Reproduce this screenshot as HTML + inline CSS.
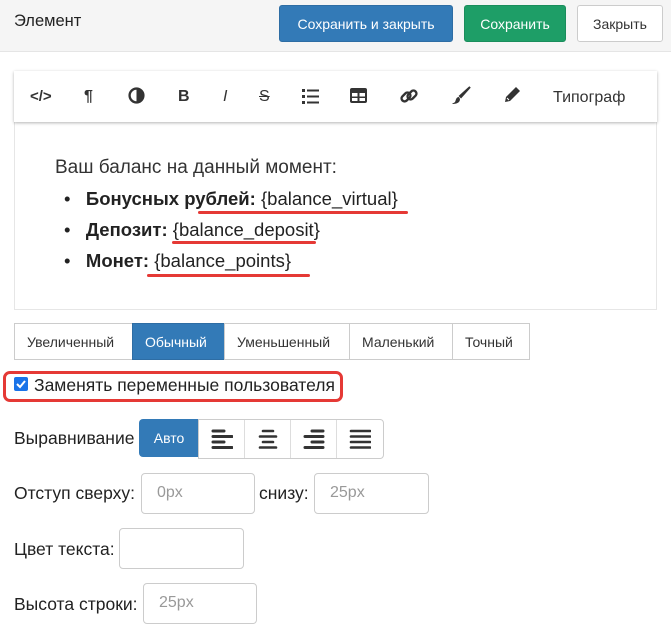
<!DOCTYPE html>
<html><head><meta charset="utf-8"><style>
*{box-sizing:border-box}
body{margin:0;width:671px;height:625px;overflow:hidden;background:#fff;font-family:"Liberation Sans",Arial,sans-serif;color:#222;position:relative}
.a{position:absolute}
.hdr{left:0;top:0;width:671px;height:52px;background:#f5f5f5;border-bottom:1px solid #e5e5e5}
.btn{position:absolute;border-radius:3px;font-size:14px;display:flex;align-items:center;justify-content:center;height:37px;top:5px}
.tb{left:14px;top:71px;width:643px;height:51px;background:#fff;box-shadow:0 1px 3px rgba(0,0,0,.3);z-index:2}
.ct{left:14px;top:120px;width:643px;height:190px;border:1px solid #e6e6e6}
.ic{position:absolute;top:17px;font-size:16px;color:#333}
.seg{top:323px;height:37px;display:flex}
.seg div{border:1px solid #ccc;margin-left:-1px;padding:0 12px;font-size:14px;display:flex;align-items:center;color:#333}
.inp{position:absolute;border:1px solid #ccc;border-radius:4px;height:41px;font-size:16px;color:#999;padding:10px 0 0 15px}
.lbl{position:absolute;font-size:17.5px;color:#222}
.ul{position:absolute;height:3px;background:#e53935;border-radius:2px}
</style></head><body>
<div class="a hdr"></div>
<div class="a" style="left:14px;top:12px;font-size:16.5px">Элемент</div>
<div class="btn" style="left:279px;width:174px;background:#337ab7;border:1px solid #2e6da4;color:#fff">Сохранить и закрыть</div>
<div class="btn" style="left:464px;width:102px;background:#1e9e67;border:1px solid #1a8d5c;color:#fff">Сохранить</div>
<div class="btn" style="left:577px;width:86px;background:#fff;border:1px solid #ccc;color:#333">Закрыть</div>

<div class="a tb">
 <div class="ic" style="left:16px;font-weight:bold;font-size:15px">&lt;/&gt;</div>
 <div class="ic" style="left:70px;font-weight:bold">¶</div>
 <div class="ic" style="left:114px;top:16px"><svg width="17" height="17" viewBox="0 0 16 16"><circle cx="8" cy="8" r="6.5" fill="none" stroke="#333" stroke-width="2.2"/><path d="M8 1.5A6.5 6.5 0 0 1 8 14.5Z" fill="#333"/></svg></div>
 <div class="ic" style="left:164px;font-weight:bold">B</div>
 <div class="ic" style="left:209px;font-style:italic">I</div>
 <div class="ic" style="left:245px;text-decoration:line-through">S</div>
 <div class="ic" style="left:288px;top:17px"><svg width="17" height="16" viewBox="0 0 17 16"><g fill="#333"><rect x="0" y="1" width="3" height="3"/><rect x="0" y="7" width="3" height="3"/><rect x="0" y="13" width="3" height="3"/><rect x="5" y="1.5" width="12" height="2"/><rect x="5" y="7.5" width="12" height="2"/><rect x="5" y="13.5" width="12" height="2"/></g></svg></div>
 <div class="ic" style="left:336px;top:17px"><svg width="17" height="15" viewBox="0 0 17 15"><rect x="0" y="0" width="17" height="15" rx="2" fill="#333"/><g fill="#fff"><rect x="2" y="5" width="5.5" height="3.5"/><rect x="9.5" y="5" width="5.5" height="3.5"/><rect x="2" y="10" width="5.5" height="3"/><rect x="9.5" y="10" width="5.5" height="3"/></g></svg></div>
 <div class="ic" style="left:385px;top:15px"><svg width="20" height="20" viewBox="0 0 20 20"><g fill="none" stroke="#333" stroke-width="2.4"><rect x="2" y="8" width="10" height="6" rx="3" transform="rotate(-45 7 11)"/><rect x="8" y="6" width="10" height="6" rx="3" transform="rotate(-45 13 9)"/></g></svg></div>
 <div class="ic" style="left:438px;top:15px"><svg width="19" height="19" viewBox="0 0 19 19"><path d="M18 1L9 11l-1-1z" fill="#333" stroke="#333" stroke-width="2"/><path d="M7 11c-3 0-3 3-4 5-1 1-2 1-3 2 4 0 8-1 8-5z" fill="#333"/></svg></div>
 <div class="ic" style="left:489px;top:15px"><svg width="18" height="18" viewBox="0 0 18 18"><path d="M13 1l4 4-10 10-5 1 1-5z" fill="#333"/><path d="M4 12l2 2" stroke="#fff" stroke-width="1"/></svg></div>
 <div class="ic" style="left:539px;top:18px;font-size:16px">Типограф</div>
</div>
<div class="a ct"></div>
<div class="a" style="left:55px;top:157px;font-size:19px;color:#333">Ваш баланс на данный момент:</div>
<div class="a" style="left:64px;top:183px;font-size:18.5px;line-height:31px;color:#222">
 <div>•&nbsp;&nbsp;&nbsp;<b>Бонусных рублей:</b> {balance_virtual}</div>
 <div>•&nbsp;&nbsp;&nbsp;<b>Депозит:</b> {balance_deposit}</div>
 <div>•&nbsp;&nbsp;&nbsp;<b>Монет:</b> {balance_points}</div>
</div>
<div class="ul" style="left:198px;top:211px;width:210px"></div>
<div class="ul" style="left:172px;top:241px;width:144px"></div>
<div class="ul" style="left:147px;top:274px;width:163px"></div>

<div class="a seg" style="left:15px">
 <div style="width:119px">Увеличенный</div>
 <div style="width:93px;background:#337ab7;border-color:#2e6da4;color:#fff">Обычный</div>
 <div style="width:126px">Уменьшенный</div>
 <div style="width:104px">Маленький</div>
 <div style="width:78px">Точный</div>
</div>
<div class="a" style="left:3px;top:371px;width:340px;height:31px;border:3px solid #e53935;border-radius:7px"></div>
<div class="a" style="left:14px;top:377px;width:14px;height:14px;background:#1a73e8;border-radius:2px"><svg width="14" height="14" viewBox="0 0 14 14"><path d="M3 7l3 3 5-6" fill="none" stroke="#fff" stroke-width="2"/></svg></div>
<div class="lbl" style="left:34px;top:375px;font-size:17.5px">Заменять переменные пользователя</div>

<div class="lbl" style="left:14px;top:428px">Выравнивание</div>
<div class="a" style="left:139px;top:419px;width:60px;height:38px;background:#337ab7;border-radius:4px 0 0 4px;color:#fff;font-size:14px;display:flex;align-items:center;justify-content:center">Авто</div>
<div class="a" style="left:198px;top:419px;width:186px;height:40px;border:1px solid #ccc;border-radius:0 4px 4px 0;display:flex">
 <div style="width:46px;border-right:1px solid #ddd;position:relative"><svg style="position:absolute;left:12px;top:9px" width="22" height="20" viewBox="0 0 22 20"><g stroke="#333" stroke-width="3" stroke-linecap="round"><path d="M2 2h11M2 7.5h19M2 13h11M2 18.5h19"/></g></svg></div>
 <div style="width:46px;border-right:1px solid #ddd;position:relative"><svg style="position:absolute;left:12px;top:9px" width="22" height="20" viewBox="0 0 22 20"><g stroke="#333" stroke-width="2.6" stroke-linecap="round"><path d="M6 2h10M3 7.5h16M6 13h10M3 18.5h16"/></g></svg></div>
 <div style="width:46px;border-right:1px solid #ddd;position:relative"><svg style="position:absolute;left:12px;top:9px" width="22" height="20" viewBox="0 0 22 20"><g stroke="#333" stroke-width="3" stroke-linecap="round"><path d="M9 2h11M2 7.5h18M9 13h11M2 18.5h18"/></g></svg></div>
 <div style="width:46px;position:relative"><svg style="position:absolute;left:12px;top:9px" width="22" height="20" viewBox="0 0 22 20"><g stroke="#333" stroke-width="2.6" stroke-linecap="round"><path d="M2 2h19M2 7.5h19M2 13h19M2 18.5h19"/></g></svg></div>
</div>

<div class="lbl" style="left:14px;top:483px">Отступ сверху:</div>
<div class="inp" style="left:141px;top:473px;width:114px">0px</div>
<div class="lbl" style="left:259px;top:483px">снизу:</div>
<div class="inp" style="left:314px;top:473px;width:115px">25px</div>
<div class="lbl" style="left:14px;top:539px">Цвет текста:</div>
<div class="inp" style="left:119px;top:528px;width:125px"></div>
<div class="lbl" style="left:14px;top:594px">Высота строки:</div>
<div class="inp" style="left:143px;top:583px;width:114px">25px</div>
</body></html>
